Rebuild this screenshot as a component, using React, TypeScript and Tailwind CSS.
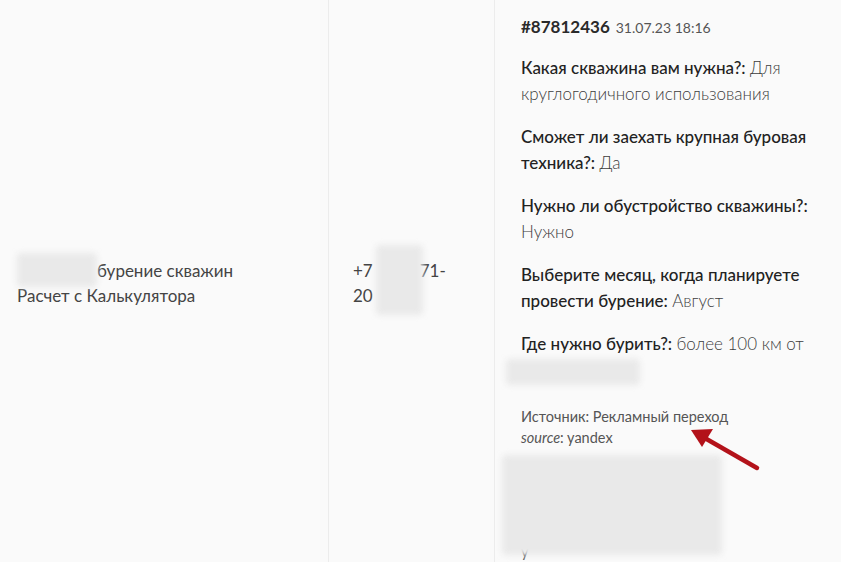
import React from 'react';

const font = { fontFamily: 'Lato, "Noto Sans", sans-serif' };

function Blur({ className }: { className: string }) {
  return <span className={`block rounded-sm bg-[#e9e9e9] blur-[3px] ${className}`} />;
}

const answers = [
  { q: 'Какая скважина вам нужна?:', a: 'Для круглогодичного использования' },
  { q: 'Сможет ли заехать крупная буровая техника?:', a: 'Да' },
  { q: 'Нужно ли обустройство скважины?:', a: 'Нужно' },
  { q: 'Выберите месяц, когда планируете провести бурение:', a: 'Август' },
];

export default function App() {
  return (
    <div className="h-[562px] w-[841px] overflow-hidden bg-[#fafafa] text-[#333]" style={font}>
      <div className="flex min-h-[566px]">
        {/* client */}
        <div className="flex w-[329px] shrink-0 items-center border-r border-[#ececec] pl-[17px] pr-4">
          <div className="relative text-[17px] leading-[25px] text-[#444]">
            <div>
              <span className="inline-block w-[80px]" />
              бурение скважин
            </div>
            <div>Расчет с Калькулятора</div>
            <Blur className="absolute left-0 top-[-5px] h-[34px] w-[80px]" />
          </div>
        </div>

        {/* phone */}
        <div className="flex w-[166px] shrink-0 items-center border-r border-[#ececec] pl-[24px] pr-4">
          <div className="relative text-[17px] leading-[25px] text-[#444]">
            <div>
              +7<span className="inline-block w-[47px]" />71-
            </div>
            <div>20</div>
            <Blur className="absolute left-[23px] top-[-13px] h-[70px] w-[47px]" />
          </div>
        </div>

        {/* details */}
        <div className="relative flex-1 pl-[26px] pr-4 pt-[14px]">
          <div className="flex items-baseline gap-[6px]">
            <span className="text-[17px] font-bold text-[#2a2a2a]">#87812436</span>
            <span className="text-[14px] text-[#555]">31.07.23 18:16</span>
          </div>

          <div className="mt-[15px] flex flex-col gap-[17px]">
            {answers.map((item) => (
              <p key={item.q} className="text-[17px] leading-[26px]">
                <span className="font-medium text-[#222]">{item.q}</span>{' '}
                <span className="font-light text-[#3d3d3d]">{item.a}</span>
              </p>
            ))}
            <div className="text-[17px] leading-[26px]">
              <span className="font-medium text-[#222]">Где нужно бурить?:</span>{' '}
              <span className="font-light text-[#3d3d3d]">более 100 км от</span>
              <div className="-ml-[15px] mt-[2px]">
                <Blur className="h-[26px] w-[134px]" />
              </div>
            </div>
          </div>

          <div className="mt-[21px] text-[14.5px] leading-[21px] text-[#555]">
            <div>Источник: Рекламный переход</div>
            <div>
              <i>source</i>: yandex
            </div>
          </div>

          <div className="relative mt-[7px] h-[100px]">
            <span className="absolute left-0 top-[86px] text-[14.5px] text-[#555]">y</span>
            <Blur className="absolute -left-[19px] top-0 h-[100px] w-[220px] bg-[#e6e6e6]" />
          </div>

          {/* annotation arrow */}
          <svg className="absolute left-[190px] top-[420px]" width="80" height="56" viewBox="0 0 80 56">
            <line x1="72" y1="48" x2="18" y2="17" stroke="#b3121a" strokeWidth="4.5" strokeLinecap="round" />
            <polygon points="6,10 28,9 17,27" fill="#b3121a" />
          </svg>
        </div>
      </div>
    </div>
  );
}
